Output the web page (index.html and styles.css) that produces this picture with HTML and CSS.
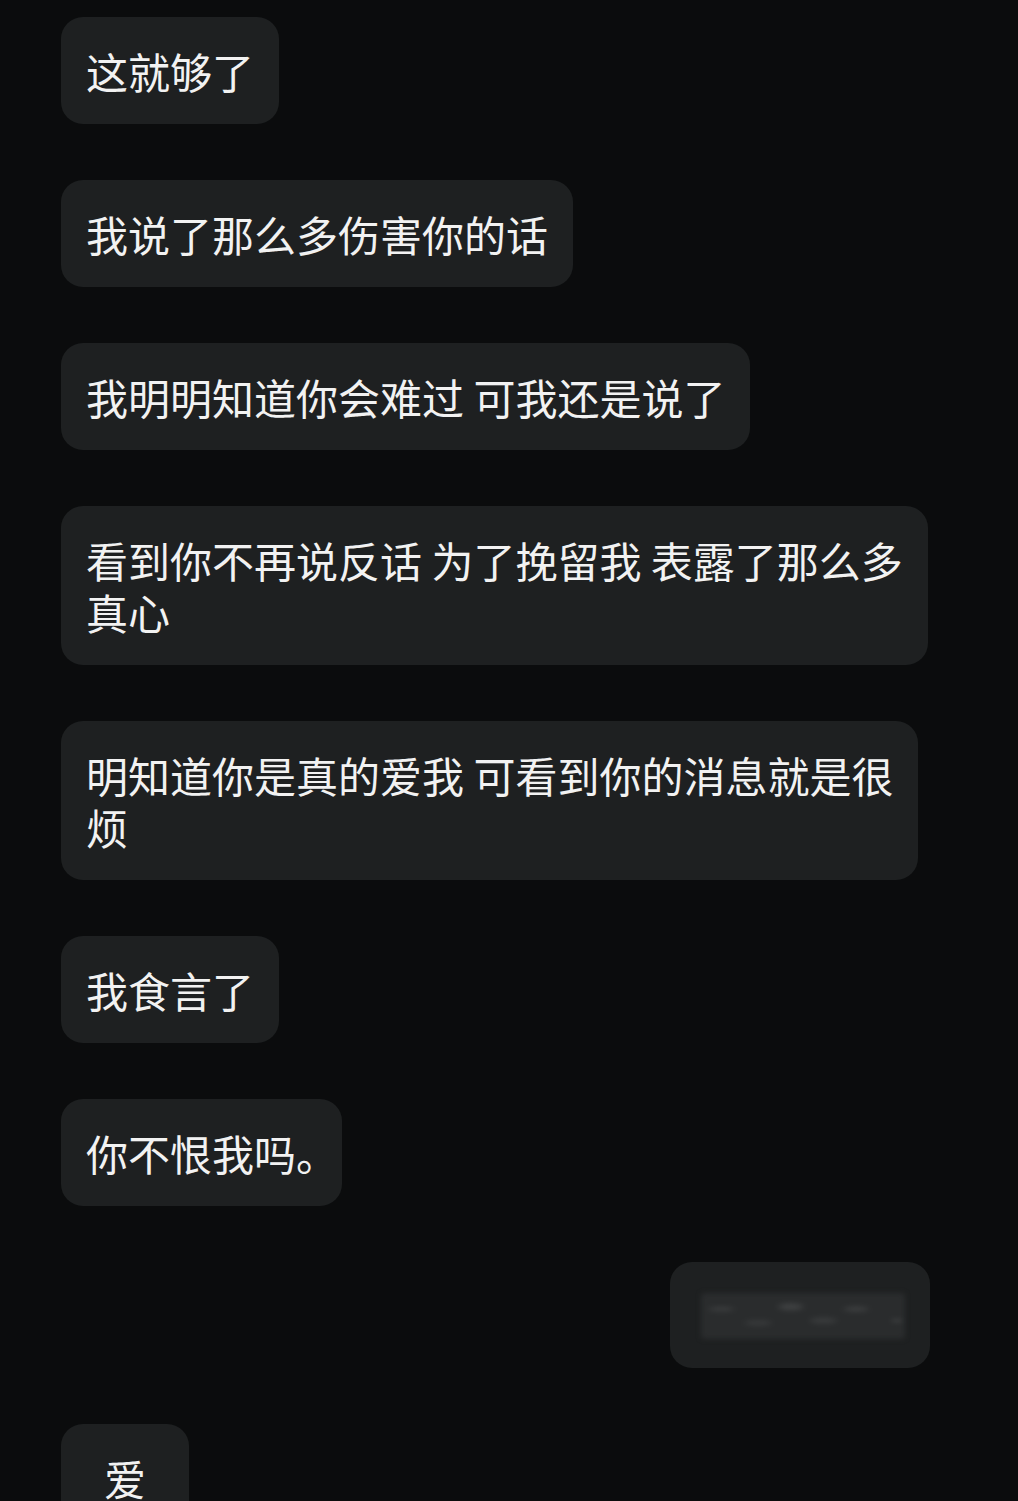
FILE: index.html
```html
<!DOCTYPE html>
<html lang="zh-CN">
<head>
    <meta charset="UTF-8">
    <meta name="viewport" content="width=device-width, initial-scale=1.0">
    <title>聊天</title>
    <link rel="stylesheet" href="styles.css">
</head>
<body>
    <div class="chat">
        <div class="bubble">这就够了</div>
        <div class="bubble">我说了那么多伤害你的话</div>
        <div class="bubble">我明明知道你会难过 可我还是说了</div>
        <div class="bubble">看到你不再说反话 为了挽留我 表露了那么多<br>真心</div>
        <div class="bubble">明知道你是真的爱我 可看到你的消息就是很<br>烦</div>
        <div class="bubble">我食言了</div>
        <div class="bubble">你不恨我吗。</div>
        <div class="bubble mine">
            <div class="mosaic"></div>
        </div>
        <div class="bubble short">爱</div>
    </div>
</body>
</html>
```

FILE: styles.css
```css
body {
    margin: 0;
    background: #0b0c0d;
    font-family: "Noto Sans CJK SC", "Noto Sans", sans-serif;
    overflow: hidden;
}

.chat {
    display: flex;
    flex-direction: column;
    align-items: flex-start;
    gap: 56px;
    padding: 17px 88px 0 61px;
}

.bubble {
    box-sizing: border-box;
    max-width: 870px;
    padding: 27.5px 25px;
    background: #1e2021;
    color: #f2f2f2;
    border-radius: 22px;
    font-size: 42px;
    line-height: 52px;
    font-feature-settings: "halt"; /* half width punctuation */
}

/* one character messages get a minimum width */
.bubble.short {
    min-width: 128px;
    text-align: center;
}

/* my own (blurred) message on the right */
.bubble.mine {
    align-self: flex-end;
    width: 260px;
    height: 106px;
    padding: 31px 25px 0 31px;
}

.mosaic {
    width: 204px;
    height: 46px;
    background:
        radial-gradient(ellipse at 10% 35%, rgba(70, 72, 73, 0.7) 0 8px, transparent 16px),
        radial-gradient(ellipse at 28% 65%, rgba(62, 64, 65, 0.7) 0 9px, transparent 17px),
        radial-gradient(ellipse at 44% 30%, rgba(72, 74, 75, 0.7) 0 8px, transparent 16px),
        radial-gradient(ellipse at 60% 60%, rgba(64, 66, 67, 0.7) 0 9px, transparent 17px),
        radial-gradient(ellipse at 76% 35%, rgba(70, 72, 73, 0.7) 0 8px, transparent 16px),
        radial-gradient(ellipse at 96% 60%, rgba(110, 112, 113, 0.8) 0 3px, transparent 7px),
        #2a2c2d;
    border-radius: 4px;
    filter: blur(2.5px);
}
```
